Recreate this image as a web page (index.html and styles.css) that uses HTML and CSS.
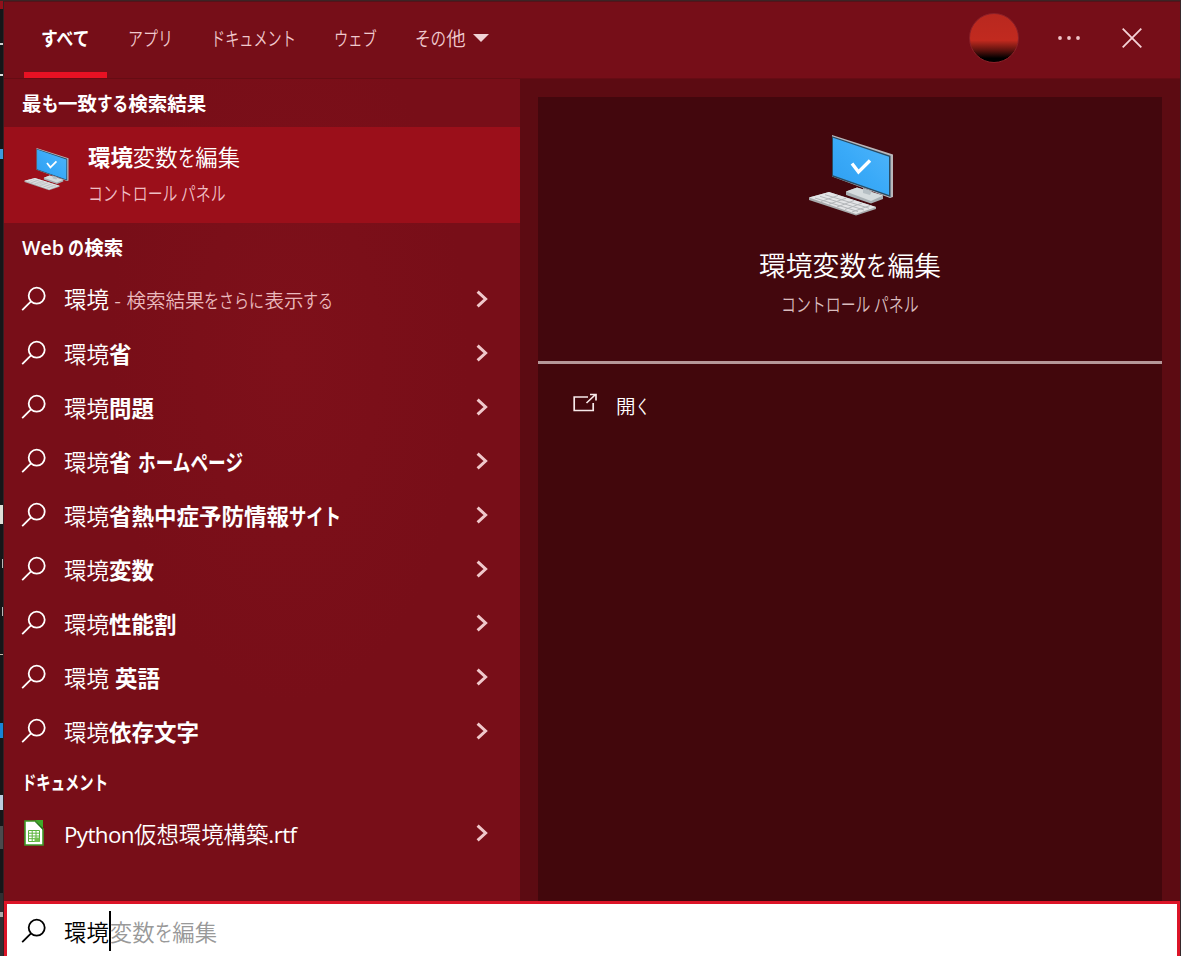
FILE: index.html
```
<!DOCTYPE html>
<html lang="ja">
<head>
<meta charset="utf-8">
<title>検索</title>
<link rel="stylesheet" href="styles.css">
</head>
<body>
<svg width="0" height="0" class="defs">
  <defs>
    <linearGradient id="screen" x1="0" y1="1" x2="1" y2="0"><stop offset="0" stop-color="#2d9df0"/><stop offset=".5" stop-color="#3aaaf8"/><stop offset="1" stop-color="#51b5fa"/></linearGradient>
    <symbol id="mag" viewBox="0 0 26 26"><circle cx="15.7" cy="9.7" r="8" fill="none" stroke="currentColor" stroke-width="1.8"/><path d="M10 15.4 1.2 24.2" fill="none" stroke="currentColor" stroke-width="1.8"/></symbol>
    <symbol id="chev" viewBox="0 0 12 18"><path d="M1.6 1.6 9.6 9l-8 7.4" fill="none" stroke="currentColor" stroke-width="3"/></symbol>
    <symbol id="pc" viewBox="0 0 86 82">
      <path d="M23 0 84 19.500v42.500l-3 1L23 41.500Z" fill="#b9b7bb"/>
      <path d="M23 1.200 81.500 20.700V62L23 41.500Z" fill="#294b62"/>
      <path d="M24 2.700 80 21.700V60L24 40.300Z" fill="url(#screen)"/>
      <path d="M43 28.500 49.500 37 61 25.500" fill="none" stroke="#fff" stroke-width="3.400"/>
      <path d="M37 56.500 48 52.500 74 60.500 74 64 62 68.500 37 60Z" fill="#a8b0b4"/>
      <path d="M37 56.500 48 52.500 74 60.500 62 66Z" fill="#d5dbdd"/>
      <path d="M54 53v5l7 2 2-4Z" fill="#b6bfc4"/>
      <path d="M0 62.500 20 57 67 72v2L47 80.500 0 65Z" fill="#a8abad"/>
      <path d="M0 62.500 20 57 67 72 47 79Z" fill="#e3e4e6"/>
      <path d="M6 63 49 76.500M11 61.300 55 75M16 59.700 60 73.200M12 66.500 29 60.500M20 69.200 37 63.200M28 72 45 65.500M36 74.500 53 68M43 77 61 70.500" stroke="#b3b6b9" stroke-width="1" fill="none"/>
    </symbol>
  </defs>
</svg>
<div class="desktop">
  <div class="behind"></div>
  <main class="search">
    <header class="tabs">
      <div class="tab active t1"><span class="kana" style="--n:3;--k:.86">すべて</span></div>
      <div class="tab t2"><span class="kana" style="--n:3;--k:.77">アプリ</span></div>
      <div class="tab t3"><span class="kana" style="--n:6;--k:.725">ドキュメント</span></div>
      <div class="tab t4"><span class="kana" style="--n:3;--k:.73">ウェブ</span></div>
      <div class="tab t5"><span class="kana" style="--n:2;--k:.8">その</span>他<i class="down"></i></div>
      <div class="avatar"></div>
      <svg class="dots" width="24" height="6" viewBox="0 0 24 6" fill="#f0c5c9"><circle cx="3" cy="3" r="1.900"/><circle cx="12" cy="3" r="1.900"/><circle cx="21" cy="3" r="1.900"/></svg>
      <svg class="close" width="20" height="20" viewBox="0 0 20 20" stroke="#f5d3d7" stroke-width="1.800"><path d="m.7.7 18.600 18.600M19.300.7.700 19.300"/></svg>
    </header>
    <div class="body">
      <section class="results">
        <h2>最<span class="kana" style="--n:1;--k:.84">も</span>一致<span class="kana" style="--n:2;--k:.8">する</span>検索結果</h2>
        <div class="best">
          <svg class="pc-small"><use href="#pc"/></svg>
          <div class="best-text">
            <p class="name"><b>環境</b>変数<span class="kana" style="--n:1;--k:.79">を</span>編集</p>
            <p class="kind"><span class="kana" style="--n:9.22;--k:.765">コントロール パネル</span></p>
          </div>
        </div>
        <h2 class="web"><span class="latin">Web</span> <span class="kana" style="--n:1;--k:.82">の</span>検索</h2>
        <ul>
          <li><svg class="mag"><use href="#mag"/></svg><span class="label">環境<small> - 検索結果<span class="kana" style="--n:4;--k:.77">をさらに</span>表示<span class="kana" style="--n:2;--k:.77">する</span></small></span><svg class="chev"><use href="#chev"/></svg></li>
          <li><svg class="mag"><use href="#mag"/></svg><span class="label">環境<b>省</b></span><svg class="chev"><use href="#chev"/></svg></li>
          <li><svg class="mag"><use href="#mag"/></svg><span class="label">環境<b>問題</b></span><svg class="chev"><use href="#chev"/></svg></li>
          <li><svg class="mag"><use href="#mag"/></svg><span class="label">環境<b>省 <span class="kana" style="--n:6;--k:.785">ホームページ</span></b></span><svg class="chev"><use href="#chev"/></svg></li>
          <li><svg class="mag"><use href="#mag"/></svg><span class="label">環境<b>省熱中症予防情報<span class="kana" style="--n:3;--k:.77">サイト</span></b></span><svg class="chev"><use href="#chev"/></svg></li>
          <li><svg class="mag"><use href="#mag"/></svg><span class="label">環境<b>変数</b></span><svg class="chev"><use href="#chev"/></svg></li>
          <li><svg class="mag"><use href="#mag"/></svg><span class="label">環境<b>性能割</b></span><svg class="chev"><use href="#chev"/></svg></li>
          <li><svg class="mag"><use href="#mag"/></svg><span class="label">環境 <b>英語</b></span><svg class="chev"><use href="#chev"/></svg></li>
          <li><svg class="mag"><use href="#mag"/></svg><span class="label">環境<b>依存文字</b></span><svg class="chev"><use href="#chev"/></svg></li>
        </ul>
        <h2><span class="kana" style="--n:6;--k:.735">ドキュメント</span></h2>
        <ul>
          <li><svg class="doc" viewBox="0 0 20 26"><path d="M1 1h11l7 8v16H1Z" fill="#fff" stroke="#3f9a28" stroke-width="1.600"/><path d="M11.500 0H19v8.500Z" fill="#3fa82a"/><path d="M11 1v1l8 8V8Z" fill="#23681a"/><path d="M4.500 10.500h11v11h-11ZM4.500 13.200h11M4.500 16h11M4.500 18.700h11M8.200 10.500v11M12 10.500v11" fill="none" stroke="#5ab33e" stroke-width="1"/><path d="M10.500 17.500h5v4.500h-5Z" fill="#72c14f"/></svg><span class="label"><span class="latin file">Python</span>仮想環境構築<span class="latin file">.rtf</span></span><svg class="chev"><use href="#chev"/></svg></li>
        </ul>
      </section>
      <section class="preview">
        <div class="summary">
          <svg class="pc-large"><use href="#pc"/></svg>
          <p class="title">環境変数<span class="kana" style="--n:1;--k:.79">を</span>編集</p>
          <p class="kind"><span class="kana" style="--n:9.22;--k:.765">コントロール パネル</span></p>
        </div>
        <div class="action">
          <svg width="25" height="20" viewBox="0 0 25 20" fill="none" stroke="#f7e9ea" stroke-width="1.700"><path d="M15 4H1.200v13.500h19V10M13.500 10 22.500 1.500M17 1.500h6v6"/></svg>
          <span class="open">開<span class="kana" style="--n:1;--k:.7">く</span></span>
        </div>
      </section>
    </div>
    <footer class="query">
      <svg class="mag"><use href="#mag"/></svg>
      <div class="typed">環境</div><i class="caret"></i><div class="hint">変数<span class="kana" style="--n:1;--k:.79">を</span>編集</div>
    </footer>
  </main>
  <div class="edge"></div>
</div>
</body>
</html>
```
FILE: styles.css
```
* { box-sizing: border-box; }
body { margin: 0; overflow: hidden; font-family: "Noto Sans CJK JP", sans-serif; font-weight: 350; color: #fff; }
h2, p, ul { margin: 0; padding: 0; list-style: none; }
b { font-weight: 700; }
.defs { position: absolute; }
.desktop { display: flex; width: 1181px; height: 956px; border-top: 1px solid #3b2425; }
.behind {
  width: 4px;
  border-right: 1px solid #352023;
  background:
    linear-gradient(#d0d0d0, #d0d0d0) 0 42px / 3px 2px,
    linear-gradient(#e0e0e0, #e0e0e0) 0 73px / 3px 2px,
    linear-gradient(#3b9bdf, #3b9bdf) 0 148px / 3px 10px,
    linear-gradient(#dfe0d8, #dfe0d8) 0 504px / 3px 19px,
    linear-gradient(#b9b9b9, #b9b9b9) 2px 558px / 1px 9px,
    linear-gradient(#b9b9b9, #b9b9b9) 2px 606px / 1px 9px,
    linear-gradient(#c9b9aa, #c9b9aa) 0 653px / 3px 1px,
    linear-gradient(#1684d8, #1684d8) 0 722px / 3px 15px,
    linear-gradient(#bccde0, #bccde0) 0 794px / 3px 15px,
    linear-gradient(#4b4b4d, #4b4b4d) 0 825px / 3px 23px,
    linear-gradient(#aaa, #aaa) 0 911px / 3px 5px,
    linear-gradient(#92101a, #92101a) 0 0 / 3px 8px,
    linear-gradient(#303033, #303033) 0 892px / 3px 64px,
    #151618;
  background-repeat: no-repeat;
}
.edge { width: 1px; background: #38282b; }
.search { width: 1176px; display: flex; flex-direction: column; background: #780e18; }
.kana { display: inline-block; white-space: pre; transform: scaleX(var(--k)); transform-origin: 0 50%; width: calc(var(--n) * 1em); margin-right: calc(var(--n) * (var(--k) - 1) * 1em); }
.latin { font-family: "Open Sans", sans-serif; }

.tabs { height: 78px; display: flex; border-top: 1px solid #551219; border-bottom: 1px solid #660c14; background: #760e18; font-size: 19.5px; color: #f0c9cd; }
.tab { height: 76px; line-height: 72px; white-space: nowrap; }
.active { color: #fff; font-weight: 700; border-bottom: 6px solid #e81123; }
.t1 { width: 83px; margin-left: 20px; padding-left: 17px; }
.t2 { width: 84px; padding-left: 21px; }
.t3 { width: 126px; padding-left: 20px; }
.t4 { width: 80px; padding-left: 17px; }
.t5 { width: 80px; padding-left: 18px; display: flex; align-items: flex-start; }
.down { flex: none; border: 8px solid transparent; border-top-color: #f0d2d5; border-bottom: 0; margin: 32px 0 0 7px; }
.avatar { width: 50px; height: 50px; margin: 11px 0 0 492px; border: 1px solid #8c2028; border-radius: 50%; background: linear-gradient(#b9281f 0, #c12a1f 55%, #5c120e 76%, #000 92%); }
.dots { margin: 33px 0 0 38px; }
.close { margin: 26px 0 0 41px; }

.body { height: 822px; display: flex; }
.results { width: 516px; background: radial-gradient(ellipse at 55% 34%, #7e101a 0, #780e18 45%, #780e18 100%); }
h2 { height: 48px; padding-left: 18px; font-size: 19.500px; line-height: 48px; font-weight: 700; white-space: pre; }
.web { line-height: 46px; }
.web .latin { font-weight: 600; }
.best { height: 96px; margin-bottom: 1px; display: flex; background: #9b0f1a; padding-left: 20px; }
.pc-small { width: 46px; height: 43px; margin-top: 21px; }
.best-text { margin-left: 18px; padding-top: 12px; }
.name { font-size: 22.400px; line-height: 34px; }
.kind { font-size: 19.500px; line-height: 36px; color: #efbec4; white-space: nowrap; }
.name + .kind { padding-top: 2px; }
li { height: 54px; display: flex; align-items: center; padding: 0 32px 0 17px; }
.mag { flex: none; width: 26px; height: 26px; margin-top: -1px; }
.label { flex: 1; margin-left: 17px; font-size: 22.500px; line-height: 40px; white-space: pre; word-spacing: 1px; }
.label small { font-size: 19.500px; color: #eab9bd; }
.chev { width: 12px; height: 18px; color: #f0c8cb; }
.doc { width: 20px; height: 26px; margin-left: 3px; }
.doc + .label { margin-left: 20px; padding-top: 2px; font-size: 22.400px; }
.file { font-weight: 400; letter-spacing: -.6px; }

.preview { width: 660px; padding: 18px 18px 0; background: #5c0b12; }
.summary { height: 267px; display: flex; flex-direction: column; align-items: center; padding-top: 38px; background: #43070d; border-bottom: 3px solid #b59799; }
.pc-large { width: 86px; height: 82px; margin-left: 3px; }
.title { margin-top: 26px; font-size: 26.800px; line-height: 44px; white-space: nowrap; }
.summary .kind { color: #d9bcbe; line-height: 34px; }
.action { height: 537px; display: flex; align-items: flex-start; padding: 29px 0 0 35px; background: #42070c; font-size: 19.500px; line-height: 28px; }
.open { margin: -1px 0 0 18px; }
.query { flex: 1; display: flex; align-items: center; border: 3px solid #dc1427; border-bottom: 0; padding: 2px 0 0 14px; background: #fff; color: #000; font-size: 22.400px; line-height: 40px; }
.typed { margin-left: 17px; }
.caret { width: 2px; height: 40px; background: #000; }
.hint { margin-left: -1px; color: #999; }
```
